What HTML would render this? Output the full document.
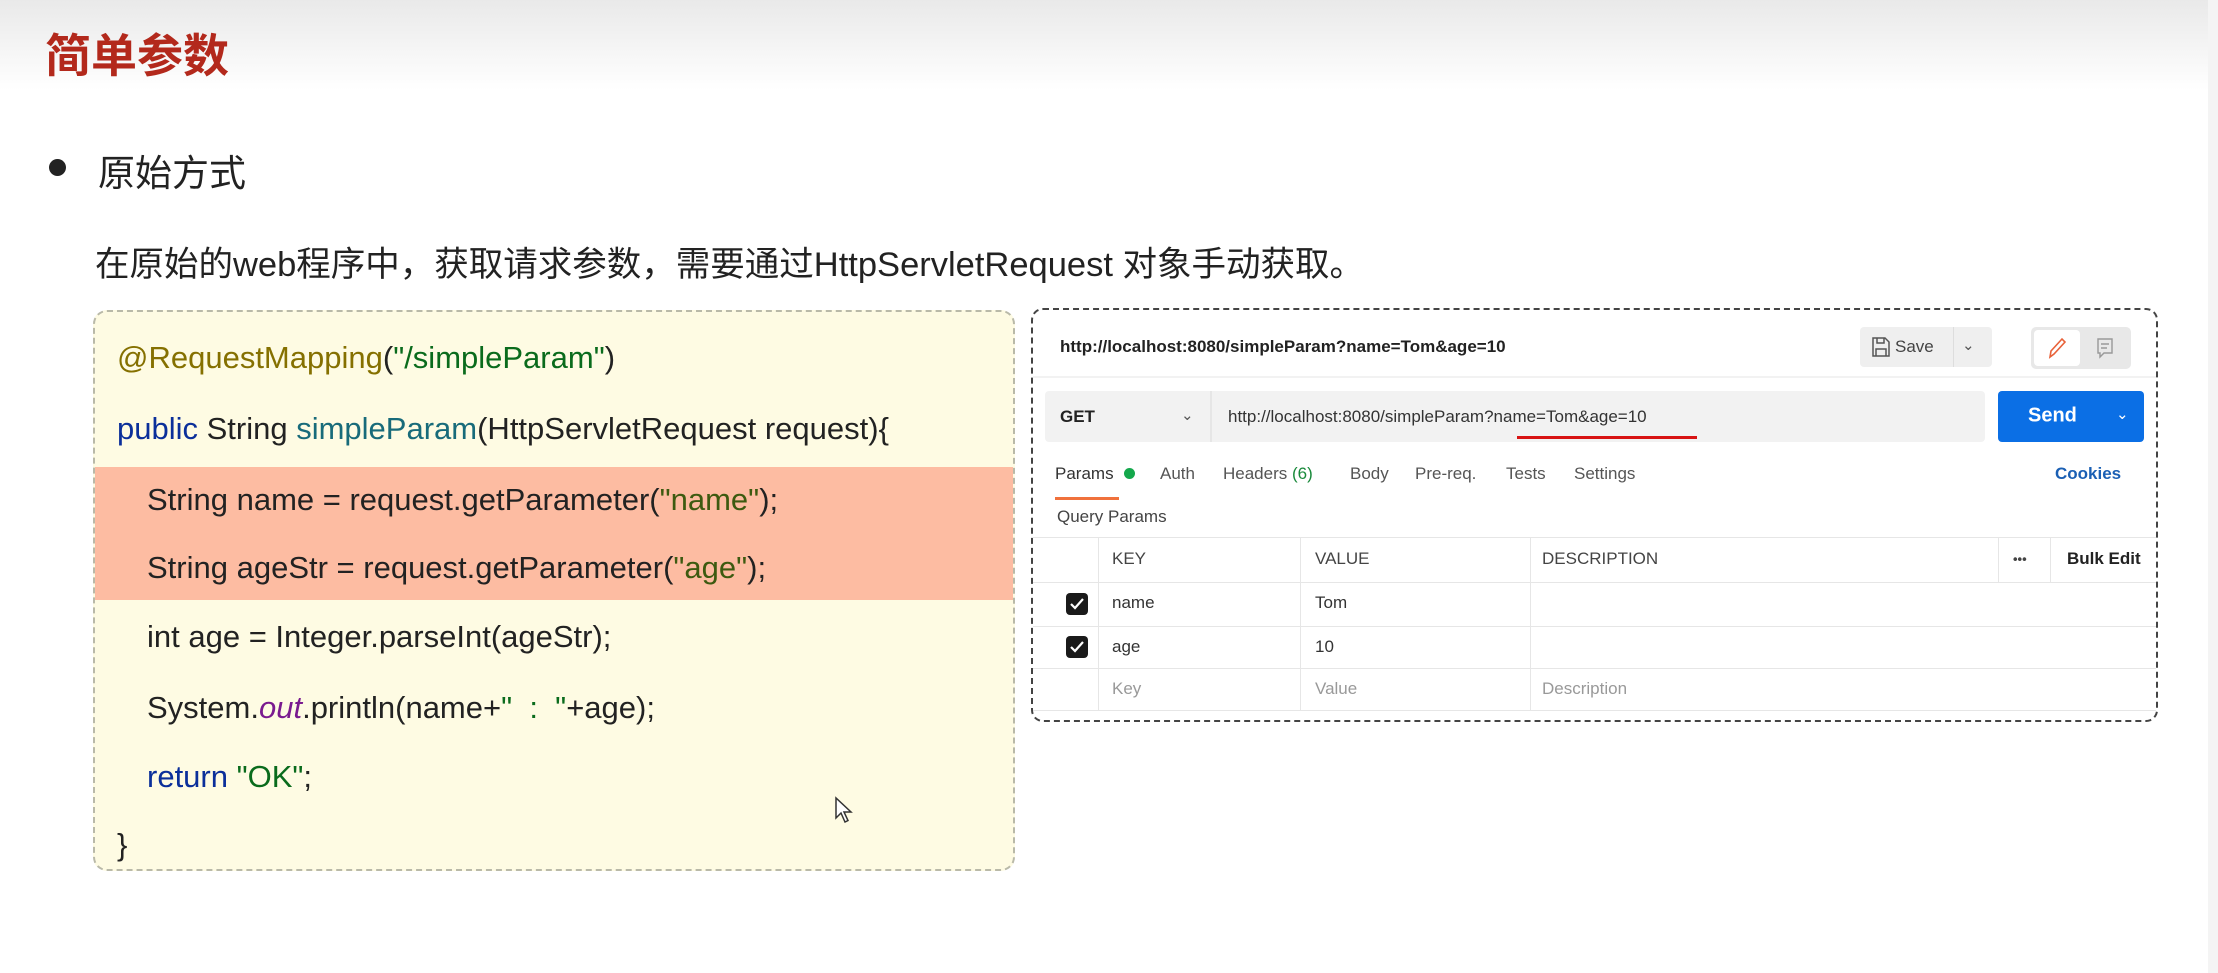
<!DOCTYPE html>
<html><head><meta charset="utf-8"><style>
body{margin:0;width:2218px;height:973px;position:relative;overflow:hidden;background:#fff;font-family:"Liberation Sans","Noto Sans CJK SC",sans-serif;}
.a{position:absolute;white-space:nowrap;}
.top{position:absolute;left:0;top:0;width:2218px;height:90px;background:linear-gradient(#e9e9e9,#fff);}
.code{position:absolute;left:93px;top:310px;width:918px;height:557px;background:#fefbe3;border:2px dashed #b9b9a8;border-radius:14px;overflow:hidden;}
.hl{position:absolute;left:0;top:155px;width:100%;height:133px;background:#fdbca2;}
.cl{position:absolute;font-size:31px;color:#222;white-space:nowrap;transform:translateY(-50%);}
.kw{color:#0b2f9a}.an{color:#857000}.st{color:#0a6b1c}.fn{color:#186b7a}.it{color:#7a1a8f;font-style:italic}
.pm{position:absolute;left:1031px;top:308px;width:1123px;height:410px;border:2px dashed #444;border-radius:12px;background:#fff;overflow:hidden;}
.p{position:absolute;white-space:nowrap;font-size:17px;color:#333;transform:translateY(-50%);}
.ln{position:absolute;background:#e6e6e6;}
.cb{position:absolute;width:22px;height:22px;background:#1a1a1a;border-radius:4px;}
</style></head><body>
<div class="top"></div>
<div class="a" style="left:45px;top:20px;font-size:46px;font-weight:bold;color:#b3291c;">简单参数</div>
<div class="a" style="left:49px;top:159px;width:17px;height:17px;border-radius:50%;background:#222;"></div>
<div class="a" style="left:98px;top:143px;font-size:37px;color:#222;">原始方式</div>
<div class="a" style="left:95px;top:236px;font-size:34.5px;color:#222;">在原始的web程序中，获取请求参数，需要通过HttpServletRequest 对象手动获取。</div>

<div class="code">
<div class="hl"></div>
<div class="cl" style="left:22px;top:46px;"><span class="an">@RequestMapping</span>(<span class="st">"/simpleParam"</span>)</div>
<div class="cl" style="left:22px;top:117px;"><span class="kw">public</span> String <span class="fn">simpleParam</span>(HttpServletRequest request){</div>
<div class="cl" style="left:52px;top:188px;">String name = request.getParameter(<span class="st" style="color:#3d5a10">"name"</span>);</div>
<div class="cl" style="left:52px;top:256px;">String ageStr = request.getParameter(<span class="st" style="color:#3d5a10">"age"</span>);</div>
<div class="cl" style="left:52px;top:325px;">int age = Integer.parseInt(ageStr);</div>
<div class="cl" style="left:52px;top:396px;">System.<span class="it">out</span>.println(name+<span class="st">"&nbsp; : &nbsp;"</span>+age);</div>
<div class="cl" style="left:52px;top:465px;"><span class="kw">return</span> <span class="st">"OK"</span>;</div>
<div class="cl" style="left:22px;top:533px;">}</div>
<svg style="position:absolute;left:739px;top:484px" width="20" height="28" viewBox="0 0 20 28"><path d="M2 2 L2 22 L7 17 L11 26 L14 24.5 L10 16 L17 16 Z" fill="#fff" stroke="#333" stroke-width="1.5"/></svg>
</div>

<div class="pm">
<div class="p" style="left:27px;top:37px;font-weight:bold;color:#222;">http://localhost:8080/simpleParam?name=Tom&amp;age=10</div>
<div class="a" style="left:827px;top:17px;width:132px;height:40px;background:#efefef;border-radius:4px;"></div>
<div class="a" style="left:920px;top:17px;width:1px;height:40px;background:#ddd;"></div>
<svg class="a" style="left:838px;top:26px" width="20" height="22" viewBox="0 0 20 22"><path d="M2 2h12l4 4v14H2z M6 2v5h7V2 M5 20v-7h10v7" fill="none" stroke="#555" stroke-width="1.5"/></svg>
<div class="p" style="left:862px;top:37px;color:#444;">Save</div>
<div class="p" style="left:929px;top:35px;color:#555;font-size:15px;">&#8964;</div>
<div class="a" style="left:998px;top:17px;width:100px;height:42px;background:#e8e8e8;border-radius:5px;"></div>
<div class="a" style="left:1001px;top:20px;width:46px;height:36px;background:#fff;border-radius:4px;"></div>
<svg class="a" style="left:1013px;top:26px" width="22" height="24" viewBox="0 0 22 24"><path d="M4 21 L5 15 L16 3 L19 6 L8 18 Z" fill="none" stroke="#e8623a" stroke-width="1.6"/></svg>
<svg class="a" style="left:1063px;top:27px" width="18" height="22" viewBox="0 0 18 22"><path d="M2 2h14v14H8l-4 4v-4H2z M5 7h8 M5 11h6" fill="none" stroke="#999" stroke-width="1.4"/></svg>
<div class="ln" style="left:0;top:66px;width:1123px;height:2px;background:#f2f2f2;"></div>
<div class="a" style="left:12px;top:81px;width:940px;height:51px;background:#f2f2f2;border-radius:4px;"></div>
<div class="a" style="left:177px;top:81px;width:2px;height:51px;background:#e6e6e6;"></div>
<div class="p" style="left:27px;top:107px;font-weight:bold;color:#222;">GET</div>
<div class="p" style="left:148px;top:105px;color:#555;font-size:15px;">&#8964;</div>
<div class="p" style="left:195px;top:107px;color:#333;">http://localhost:8080/simpleParam?name=Tom&amp;age=10</div>
<div class="a" style="left:484px;top:126px;width:180px;height:3px;background:#d81414;"></div>
<div class="a" style="left:965px;top:81px;width:146px;height:51px;background:#0b6fe5;border-radius:4px;"></div>
<div class="p" style="left:995px;top:106px;color:#fff;font-weight:bold;font-size:20px;">Send</div>
<div class="p" style="left:1083px;top:104px;color:#fff;font-size:15px;">&#8964;</div>
<div class="p" style="left:22px;top:164px;color:#333;">Params</div>
<div class="a" style="left:91px;top:158px;width:11px;height:11px;border-radius:50%;background:#14a84c;"></div>
<div class="a" style="left:22px;top:187px;width:64px;height:3px;background:#f0713c;"></div>
<div class="p" style="left:127px;top:164px;color:#555;">Auth</div>
<div class="p" style="left:190px;top:164px;color:#555;">Headers <span style="color:#1a8a3c">(6)</span></div>
<div class="p" style="left:317px;top:164px;color:#555;">Body</div>
<div class="p" style="left:382px;top:164px;color:#555;">Pre-req.</div>
<div class="p" style="left:473px;top:164px;color:#555;">Tests</div>
<div class="p" style="left:541px;top:164px;color:#555;">Settings</div>
<div class="p" style="left:1022px;top:164px;color:#1a5fb4;font-weight:bold;">Cookies</div>
<div class="p" style="left:24px;top:207px;color:#444;">Query Params</div>
<div class="ln" style="left:0;top:227px;width:1123px;height:1px;"></div>
<div class="ln" style="left:0;top:272px;width:1123px;height:1px;"></div>
<div class="ln" style="left:0;top:316px;width:1123px;height:1px;"></div>
<div class="ln" style="left:0;top:358px;width:1123px;height:1px;"></div>
<div class="ln" style="left:0;top:400px;width:1123px;height:1px;"></div>
<div class="ln" style="left:65px;top:227px;width:1px;height:173px;"></div>
<div class="ln" style="left:267px;top:227px;width:1px;height:173px;"></div>
<div class="ln" style="left:497px;top:227px;width:1px;height:173px;"></div>
<div class="ln" style="left:965px;top:227px;width:1px;height:45px;"></div>
<div class="ln" style="left:1017px;top:227px;width:1px;height:45px;"></div>
<div class="p" style="left:79px;top:249px;color:#444;">KEY</div>
<div class="p" style="left:282px;top:249px;color:#444;">VALUE</div>
<div class="p" style="left:509px;top:249px;color:#444;">DESCRIPTION</div>
<div class="p" style="left:980px;top:249px;color:#444;font-size:13px;font-weight:bold;">&#8226;&#8226;&#8226;</div>
<div class="p" style="left:1034px;top:249px;color:#222;font-weight:bold;">Bulk Edit</div>
<div class="cb" style="left:33px;top:283px;"></div>
<div class="cb" style="left:33px;top:326px;"></div>
<svg class="a" style="left:36px;top:287px" width="16" height="14"><path d="M2 7l4 4 8-9" fill="none" stroke="#fff" stroke-width="2.2"/></svg>
<svg class="a" style="left:36px;top:330px" width="16" height="14"><path d="M2 7l4 4 8-9" fill="none" stroke="#fff" stroke-width="2.2"/></svg>
<div class="p" style="left:79px;top:293px;color:#333;">name</div>
<div class="p" style="left:282px;top:293px;color:#333;">Tom</div>
<div class="p" style="left:79px;top:337px;color:#333;">age</div>
<div class="p" style="left:282px;top:337px;color:#333;">10</div>
<div class="p" style="left:79px;top:379px;color:#999;">Key</div>
<div class="p" style="left:282px;top:379px;color:#999;">Value</div>
<div class="p" style="left:509px;top:379px;color:#999;">Description</div>
</div>
<div class="a" style="left:2208px;top:0;width:10px;height:973px;background:#f4f4f4;"></div>
</body></html>
